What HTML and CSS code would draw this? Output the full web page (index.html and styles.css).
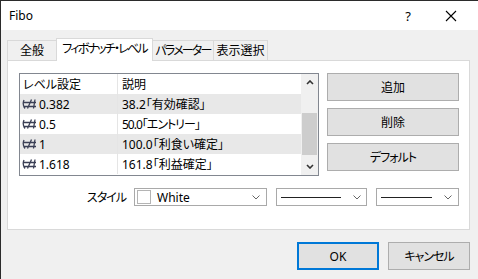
FILE: index.html
```html
<!DOCTYPE html>
<html lang="ja">
<head>
    <meta charset="UTF-8">
    <title>Fibo</title>
    <link rel="stylesheet" href="styles.css">
</head>
<body>
    <div class="window">
        <!-- Title Bar -->
        <div class="titlebar">
            <span class="title">Fibo</span>
            <span class="help">?</span>
            <svg class="close" width="12" height="12" viewBox="0 0 12 12">
                <path d="M1 1 L11 11 M11 1 L1 11" stroke="#000" stroke-width="1.1" fill="none"/>
            </svg>
        </div>

        <div class="dialog">
            <!-- Tabs -->
            <div class="tabs">
                <div class="tab tab-general">全般</div>
                <div class="tab tab-fibo active kana">フィボナッチ・レベル</div>
                <div class="tab tab-params kana">パラメーター</div>
                <div class="tab tab-view">表示選択</div>
            </div>

            <!-- Tab Panel -->
            <div class="panel">
                <div class="levels">
                    <div class="list">
                        <div class="grid">
                            <div class="cell head">レベル設定</div>
                            <div class="cell head desc">説明</div>

                            <div class="cell odd"><svg class="lvl-icon" viewBox="0 0 15 10"><path d="M1 3.5 H14 M1 7.5 H14 M9.5 0.5 L5.5 9.5 M2 1 Q0 5.5 3 9.5 M13 0.5 L11.5 9.5"/></svg>0.382</div>
                            <div class="cell odd desc">38.2「有効確認」</div>

                            <div class="cell"><svg class="lvl-icon" viewBox="0 0 15 10"><path d="M1 3.5 H14 M1 7.5 H14 M9.5 0.5 L5.5 9.5 M2 1 Q0 5.5 3 9.5 M13 0.5 L11.5 9.5"/></svg>0.5</div>
                            <div class="cell desc kana">50.0「エントリー」</div>

                            <div class="cell odd"><svg class="lvl-icon" viewBox="0 0 15 10"><path d="M1 3.5 H14 M1 7.5 H14 M9.5 0.5 L5.5 9.5 M2 1 Q0 5.5 3 9.5 M13 0.5 L11.5 9.5"/></svg>1</div>
                            <div class="cell odd desc">100.0「利食い確定」</div>

                            <div class="cell"><svg class="lvl-icon" viewBox="0 0 15 10"><path d="M1 3.5 H14 M1 7.5 H14 M9.5 0.5 L5.5 9.5 M2 1 Q0 5.5 3 9.5 M13 0.5 L11.5 9.5"/></svg>1.618</div>
                            <div class="cell desc">161.8「利益確定」</div>
                        </div>

                        <!-- Scrollbar -->
                        <div class="scrollbar">
                            <div class="arrow">
                                <svg width="8" height="5" viewBox="0 0 8 5"><path d="M1 4 L4 1 L7 4" stroke="#333" stroke-width="1.6" fill="none"/></svg>
                            </div>
                            <div class="track"><div class="thumb"></div></div>
                            <div class="arrow">
                                <svg width="8" height="5" viewBox="0 0 8 5"><path d="M1 1 L4 4 L7 1" stroke="#333" stroke-width="1.6" fill="none"/></svg>
                            </div>
                        </div>
                    </div>

                    <div class="side-buttons">
                        <button class="btn">追加</button>
                        <button class="btn">削除</button>
                        <button class="btn kana">デフォルト</button>
                    </div>
                </div>

                <!-- Style Row -->
                <div class="style-row">
                    <span class="style-label kana">スタイル</span>
                    <div class="combo color-combo">
                        <span class="swatch"></span>
                        <span class="combo-text">White</span>
                        <svg class="chev" width="8" height="5" viewBox="0 0 8 5"><path d="M0.5 0.5 L4 4 L7.5 0.5" stroke="#666" stroke-width="1" fill="none"/></svg>
                    </div>
                    <div class="combo line-combo">
                        <span class="line"></span>
                        <svg class="chev" width="8" height="5" viewBox="0 0 8 5"><path d="M0.5 0.5 L4 4 L7.5 0.5" stroke="#666" stroke-width="1" fill="none"/></svg>
                    </div>
                    <div class="combo width-combo">
                        <span class="line"></span>
                        <svg class="chev" width="8" height="5" viewBox="0 0 8 5"><path d="M0.5 0.5 L4 4 L7.5 0.5" stroke="#666" stroke-width="1" fill="none"/></svg>
                    </div>
                </div>
            </div>

            <!-- Dialog Buttons -->
            <div class="footer">
                <button class="btn dlg-btn default">OK</button>
                <button class="btn dlg-btn kana">キャンセル</button>
            </div>
        </div>
    </div>
</body>
</html>
```

FILE: styles.css
```css
/* General */
body {
    margin: 0;
    background-color: #f0f0f0;
    font-family: "Noto Sans", "Noto Sans CJK JP", sans-serif;
    font-size: 12px;
    color: #000;
    font-feature-settings: "palt";
}

/* Katakana in the Windows UI font is much narrower */
.kana {
    letter-spacing: -1px;
}

.window {
    width: 477px;
    height: 278px;
    border-top: 1px solid #2b2b2b;
    border-left: 1px solid #2b2b2b;
    background-color: #f0f0f0;
    overflow: hidden;
}

/* Title Bar */
.titlebar {
    height: 29px;
    background-color: #fff;
    display: flex;
    align-items: center;
    padding-left: 8px;
}

.title {
    flex: 1;
    font-size: 12px;
}

.help {
    font-size: 13px;
    margin-right: 34px;
}

.close {
    margin-right: 21px;
}

/* Dialog body */
.dialog {
    padding: 0 8px 0 6px;
}

.tabs {
    display: flex;
    align-items: flex-end;
    height: 22px;
    margin-top: 8px;
    position: relative;
    z-index: 1;
}

.tab {
    height: 19px;
    line-height: 19px;
    border: 1px solid #d9d9d9;
    border-bottom: none;
    margin-right: -1px;
    background-color: #f0f0f0;
    white-space: nowrap;
    text-align: center;
}

.tab.kana {
    letter-spacing: -1.8px;
}

.tab-general { width: 48px; }
.tab-fibo { width: 95px; }
.tab-params { width: 60px; }
.tab-view { width: 53px; }

.tab.active {
    height: 22px;
    line-height: 20px;
    margin-bottom: -1px;
    background-color: #fff;
}

/* Panel */
.panel {
    background-color: #fff;
    border: 1px solid #d9d9d9;
    padding: 12px 9px 23px 11px;
}

.levels {
    display: flex;
    gap: 8px;
}

.list {
    width: 298px;
    height: 101px;
    border: 1px solid #828790;
    display: flex;
}

.grid {
    flex: 1;
    display: grid;
    grid-template-columns: 97px 1fr;
    grid-template-rows: 20px repeat(4, 20px);
    align-content: start;
}

.cell {
    display: flex;
    align-items: center;
    padding-left: 2px;
    white-space: nowrap;
}

.cell.head {
    padding-left: 3px;
}

.cell.desc {
    border-left: 1px solid #e5e5e5;
    padding-left: 4px;
}

.cell.odd {
    background-color: #e8e8e8;
}

.lvl-icon {
    width: 15px;
    height: 10px;
    margin-right: 2px;
    fill: none;
    stroke: #3a3f55;
    stroke-width: 1.3;
}

/* Scrollbar */
.scrollbar {
    width: 17px;
    background-color: #f0f0f0;
    display: flex;
    flex-direction: column;
}

.arrow {
    height: 17px;
    display: flex;
    align-items: center;
    justify-content: center;
}

.track {
    flex: 1;
}

.thumb {
    margin: 22px 1px 0;
    height: 42px;
    background-color: #cdcdcd;
}

/* Buttons */
.btn {
    font-family: inherit;
    font-size: 12px;
    font-feature-settings: "palt";
    color: #000;
    background-color: #e1e1e1;
    border: 1px solid #adadad;
    padding: 0;
}

.side-buttons {
    display: flex;
    flex-direction: column;
    gap: 7px;
}

.side-buttons .btn {
    width: 132px;
    height: 28px;
}

/* Style Row */
.style-row {
    display: flex;
    align-items: center;
    margin-top: 12px;
    gap: 9px;
}

.style-label {
    width: 107px;
    text-align: right;
}

.combo {
    height: 18px;
    border: 1px solid #a9a9a9;
    background-color: #fff;
    display: flex;
    align-items: center;
    box-sizing: border-box;
}

.color-combo {
    width: 133px;
    padding: 0 6px 0 2px;
    margin-left: -1px;
}

.swatch {
    width: 14px;
    height: 14px;
    border: 1px solid #b4b4b4;
    box-sizing: border-box;
    margin-right: 6px;
}

.combo-text {
    flex: 1;
    font-size: 12px;
}

.line-combo {
    width: 91px;
    padding: 0 5px 0 4px;
}

.width-combo {
    width: 83px;
    padding: 0 6px 0 4px;
}

.line {
    flex: 1;
    height: 1px;
    background-color: #222;
    margin-right: 12px;
}

/* Footer */
.footer {
    display: flex;
    justify-content: flex-end;
    gap: 9px;
    margin-top: 12px;
}

.dlg-btn {
    width: 82px;
    height: 28px;
}

.dlg-btn.default {
    border: 2px solid #0078d7;
}
```
